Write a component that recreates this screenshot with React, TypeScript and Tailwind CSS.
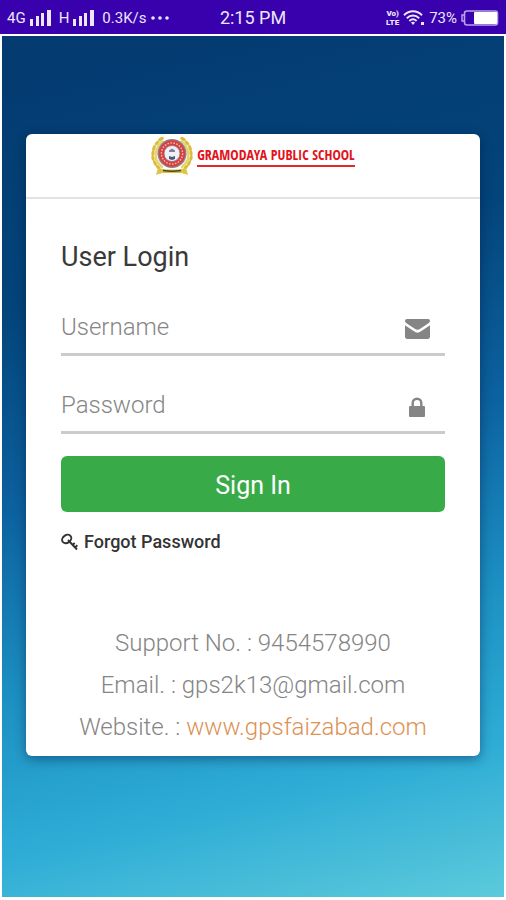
import { useState } from "react";

function SignalBars() {
  return (
    <svg width="21" height="16" viewBox="0 0 21 16" fill="currentColor" aria-hidden="true">
      <rect x="0" y="9" width="3" height="7" />
      <rect x="6" y="6" width="3" height="10" />
      <rect x="11" y="3" width="3" height="13" />
      <rect x="17" y="0" width="4" height="16" />
    </svg>
  );
}

function WifiIcon() {
  return (
    <svg width="22" height="16" viewBox="0 0 22 16" fill="none" stroke="currentColor" strokeWidth="1.9" aria-hidden="true">
      <path d="M1 5.2C6.4 0 13.6 0 19 5.2" />
      <path d="M3.8 8.2c3.7-3.6 8.7-3.6 12.4 0" />
      <path d="M6.4 11c2.2-2.1 5-2.1 7.2 0" />
      <path d="M8 12.6c1.3-1.1 2.7-1.1 4 0l-2 2.4z" fill="currentColor" stroke="none" />
      <rect x="18" y="12" width="3" height="3" fill="currentColor" stroke="none" />
    </svg>
  );
}

function BatteryIcon() {
  return (
    <svg width="38" height="16" viewBox="0 0 38 16" fill="none" aria-hidden="true">
      <path d="M3 5H1v6h2" stroke="#b9a3ea" strokeWidth="1.5" />
      <rect x="3.5" y="1" width="33" height="14" rx="2.5" stroke="#b9a3ea" strokeWidth="1.6" />
      <rect x="13" y="2" width="23" height="12" rx="1" fill="#fff" />
    </svg>
  );
}

function StatusBar() {
  return (
    <div className="grid h-[34px] grid-cols-[1fr_auto_1fr] items-center bg-[#3900ae] px-[7px] pt-0.5 text-[#ece6fb]">
      <div className="flex items-center gap-1 text-[15px]">
        <span>4G</span>
        <SignalBars />
        <span className="ml-1">H</span>
        <SignalBars />
        <span className="ml-1">0.3K/s</span>
        <svg width="18" height="4" viewBox="0 0 18 4" fill="currentColor" aria-hidden="true">
          <circle cx="2" cy="2" r="1.8" />
          <circle cx="9" cy="2" r="1.8" />
          <circle cx="16" cy="2" r="1.8" />
        </svg>
      </div>
      <div className="text-lg">2:15 PM</div>
      <div className="flex items-center justify-end gap-1 text-[15px]">
        <div className="text-center text-[8px] leading-[9px] font-black">
          <div>Vo)</div>
          <div>LTE</div>
        </div>
        <WifiIcon />
        <span>73%</span>
        <BatteryIcon />
      </div>
    </div>
  );
}

// leaf positions run down the left side of the wreath, the right side is mirrored
const leaves = [
  [10, 2, 60],
  [6, 6, 40],
  [3, 11, 20],
  [2, 16, 5],
  [2, 21, -10],
  [4, 26, -25],
  [7, 30, -40],
];

function Wreath() {
  return (
    <g>
      {leaves.map(([x, y, r]) => (
        <g key={y} transform={`translate(${x} ${y}) rotate(${r})`}>
          <ellipse rx="1.6" ry="3" fill="#d9bd3c" />
          <ellipse cx="3" cy="1" rx="1.4" ry="2.8" fill="#e8d46a" />
        </g>
      ))}
    </g>
  );
}

function Crest() {
  return (
    <svg width="42" height="38" viewBox="0 0 42 38" aria-hidden="true">
      <Wreath />
      <g transform="translate(42 0) scale(-1 1)">
        <Wreath />
      </g>
      <circle cx="21" cy="16.5" r="14.5" fill="#8d8095" />
      <circle cx="21" cy="16.5" r="13.2" fill="#d8403c" />
      <circle cx="21" cy="16.5" r="10.6" fill="none" stroke="#f3b9b2" strokeWidth="1.4" strokeDasharray="1.6 1.4" />
      <circle cx="21" cy="16.5" r="8" fill="#eef0f6" stroke="#8b6f88" strokeWidth="0.8" />
      <path d="M18 13.5l3-2 3 2v1.5h-6z" fill="#7d8295" />
      <path d="M18 19l3 1 3-1v3l-3 1-3-1z" fill="#4e5876" />
      <path d="M7 31c9 2 19 2 28 0l2 7c-3-1-5-2-7-2H12c-2 0-4 1-7 2z" fill="#dcc445" />
      <path d="M12 33.5c6 1 12 1 18 0" stroke="#4d4522" strokeWidth="1.6" fill="none" />
    </svg>
  );
}

function KeyIcon() {
  return (
    <svg width="17" height="18" viewBox="0 0 17 18" fill="none" stroke="currentColor" strokeWidth="1.9" aria-hidden="true">
      <ellipse cx="5.7" cy="6" rx="4.9" ry="3.8" transform="rotate(-35 5.7 6)" />
      <path d="M7 7l9 9.5M11.5 12l2.2-2M14 14.5l2.3-2.2" />
    </svg>
  );
}

function EnvelopeIcon() {
  return (
    <svg width="25" height="20" viewBox="0 0 25 20" fill="currentColor" aria-hidden="true">
      <path d="M2 0h21c1.2 0 2 .9 2 2 0 1-.8 1.7-1.8 2.4l-8 5.3c-1 .7-1.7 1.1-2.7 1.1s-1.7-.4-2.7-1.1l-8-5.3C.8 3.7 0 3 0 2 0 .9.8 0 2 0z" />
      <path d="M0 6.2l9 6.1c1.3.9 2.2 1.4 3.5 1.4s2.2-.5 3.5-1.4l9-6.1v11.6c0 1.2-1 2.2-2.2 2.2H2.2C1 20 0 19 0 17.8z" />
    </svg>
  );
}

function LockIcon() {
  return (
    <svg width="16" height="20" viewBox="0 0 16 20" fill="none" aria-hidden="true">
      <path d="M3.7 10V6a4.3 4.3 0 0 1 8.6 0v4" stroke="currentColor" strokeWidth="2.4" />
      <rect y="9" width="16" height="11" rx="1" fill="currentColor" />
    </svg>
  );
}

function Field({ id, label, type, value, onChange, icon }: any) {
  return (
    <div className="flex h-14 items-center border-b-3 border-[#cbcbcb]">
      <input
        id={id}
        type={type}
        value={value}
        placeholder={label}
        aria-label={label}
        onChange={(e) => onChange(e.target.value)}
        className="h-full min-w-0 flex-1 bg-transparent text-2xl font-light text-[#555] outline-none placeholder:text-[#858585]"
      />
      <label htmlFor={id} className="flex w-14 justify-center pt-1 text-[#858585]">
        {icon}
      </label>
    </div>
  );
}

export default function App() {
  const [username, setUsername] = useState("");
  const [password, setPassword] = useState("");

  return (
    <div className="flex min-h-screen flex-col bg-white font-[Roboto,sans-serif]">
      <StatusBar />
      <main className="mx-0.5 mt-0.5 mb-[3px] flex-1 bg-[linear-gradient(167deg,#043a70_0%,#03447a_28%,#0c62a0_49%,#1c90c2_68%,#2eacd6_84%,#5ccadb_100%)] px-6 pt-[98px] pb-20">
        <div className="rounded-md bg-white shadow-[0_3px_12px_rgba(0,20,60,0.45)]">
          <header className="flex h-[65px] items-start justify-center gap-1 border-b-2 border-[#e2e2e2] pt-[3px]">
            <Crest />
            <h1 className="mt-2 border-b-2 border-[#e0282d] font-['Open_Sans_Condensed','Roboto_Condensed',sans-serif] text-sm leading-5 font-black whitespace-nowrap text-[#e3131b]">
              GRAMODAYA PUBLIC SCHOOL
            </h1>
          </header>

          <form onSubmit={(e) => e.preventDefault()} className="px-[35px] pt-10">
            <h2 className="text-[27px] leading-9 text-[#3a3a3a]">User Login</h2>
            <div className="mt-[25px] flex flex-col gap-[22px]">
              <Field
                id="username"
                label="Username"
                type="text"
                value={username}
                onChange={setUsername}
                icon={<EnvelopeIcon />}
              />
              <Field
                id="password"
                label="Password"
                type="password"
                value={password}
                onChange={setPassword}
                icon={<LockIcon />}
              />
              <button type="submit" className="h-14 rounded-md bg-[#38ab48] pt-1 text-[25px] text-white">
                Sign In
              </button>
            </div>
            <a href="#forgot" className="mt-4 inline-flex items-center gap-1.5 text-lg leading-7 font-medium text-[#333]">
              <KeyIcon />
              Forgot Password
            </a>
          </form>

          <footer className="mt-16 pb-2 text-center text-2xl leading-[42px] font-light text-[#858585]">
            <p>Support No. : 9454578990</p>
            <p>Email. : gps2k13@gmail.com</p>
            <p>
              Website. :{" "}
              <a href="#website" className="text-[#dc9155]">
                www.gpsfaizabad.com
              </a>
            </p>
          </footer>
        </div>
      </main>
    </div>
  );
}
